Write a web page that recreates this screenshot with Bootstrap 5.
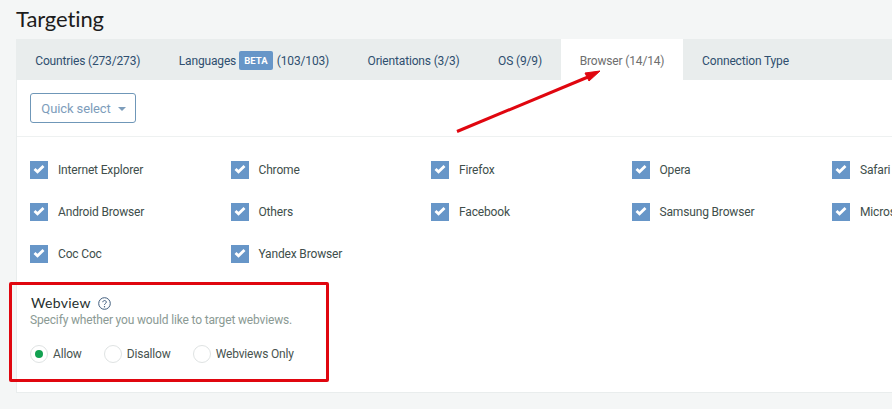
<!DOCTYPE html>
<html lang="en">
<head>
<meta charset="utf-8">
<title>Targeting</title>
<link href="https://cdn.jsdelivr.net/npm/bootstrap@5.3.0/dist/css/bootstrap.min.css" rel="stylesheet">
<style>
html,body{height:409px;overflow:hidden}
body{background:#f4f6f6;font-family:Roboto,sans-serif;font-size:12px;letter-spacing:-.16px;color:#3c4a47;position:relative}
.page-wrap{width:1200px;padding:5px 0 0 16px}
.page-title{font-family:Lato,sans-serif;font-size:22px;font-weight:400;line-height:28px;margin:0 0 6px;color:#1c1c1c;letter-spacing:-.1px}
.panel-box{background:#fff;border:1px solid #e9eded;border-top:0;height:354px}
.tab-bar{background:#e9eded;height:41px;margin:0 -1px;flex-wrap:nowrap}
.tab-link{display:flex;align-items:center;gap:3px;padding:2px 19.250px 0;height:41px;color:#2f4f6f;text-decoration:none;white-space:nowrap}
.tab-link.is-active{background:#fff;color:#6e6e6e;padding:2px 18.500px 0}
.beta-tag{background:#6796c8;color:#fff;font-size:9.500px;font-weight:700;border-radius:2px;padding:0 5px;line-height:19px;height:19px;letter-spacing:.1px;margin-right:1px}
.quick-row{height:57px;border-bottom:1px solid #eef1f1;padding:13px 0 0 13px}
.quick-btn{width:106px;height:30px;padding:1px 0 0 1px;border:1px solid #6f97b8;border-radius:3px;background:#fff;color:#7d9dbb;font-size:13px;letter-spacing:-.1px;display:flex;align-items:center;justify-content:center;gap:7px}
.quick-caret{border:4px solid transparent;border-top-color:#7d9dbb;border-bottom:0;width:0;height:0}
.browser-grid{display:grid;grid-template-columns:repeat(6,200.5px);grid-auto-rows:42px;padding:24px 0 0 13px;height:157px}
.browser-item{display:flex;gap:10px;height:18px;line-height:19px;color:#404e4b;white-space:nowrap}
.check-box{width:18px;height:18px;background:#6796c8;flex:none;display:flex;align-items:center;justify-content:center;padding-bottom:2px}
.webview-block{padding:0 0 0 13px}
.webview-head{font-family:Lato,sans-serif;font-size:14px;line-height:18px;color:#26302e;letter-spacing:.3px;display:flex;align-items:center;gap:7px;padding-left:1px}
.webview-sub{color:#8b9a94;line-height:16px}
.radio-row{margin-top:17px;gap:22px}
.radio-item{display:flex;align-items:center;gap:5px;line-height:18px;color:#48544f}
.radio-dot{width:18px;height:18px;border:1px solid #dfe3e3;border-radius:50%;background:#fff;display:flex;align-items:center;justify-content:center}
.radio-dot.is-on::after{content:"";width:8px;height:8px;border-radius:50%;background:#12a150}
.red-frame{position:absolute;left:9px;top:282px;width:320px;height:100px;border:3px solid #e0060f;border-radius:2px}
.red-arrow{position:absolute;left:0;top:0;pointer-events:none}
</style>
</head>
<body>
<div class="page-wrap">
  <h1 class="page-title">Targeting</h1>
  <div class="panel-box">
    <div class="tab-bar d-flex">
      <a class="tab-link" href="#">Countries (273/273)</a>
      <a class="tab-link" href="#">Languages <span class="beta-tag">BETA</span> (103/103)</a>
      <a class="tab-link" href="#">Orientations (3/3)</a>
      <a class="tab-link" href="#">OS (9/9)</a>
      <a class="tab-link is-active" href="#">Browser (14/14)</a>
      <a class="tab-link" href="#">Connection Type</a>
    </div>
    <div class="quick-row">
      <button class="quick-btn" type="button">Quick select <span class="quick-caret"></span></button>
    </div>
    <div class="browser-grid">
      <div class="browser-item"><span class="check-box"><svg width="12" height="10" viewBox="0 0 12 10"><path d="M1.500 5l3 2.800L10.500 2" fill="none" stroke="#fff" stroke-width="2.800"/></svg></span>Internet Explorer</div>
      <div class="browser-item"><span class="check-box"><svg width="12" height="10" viewBox="0 0 12 10"><path d="M1.500 5l3 2.800L10.500 2" fill="none" stroke="#fff" stroke-width="2.800"/></svg></span>Chrome</div>
      <div class="browser-item"><span class="check-box"><svg width="12" height="10" viewBox="0 0 12 10"><path d="M1.500 5l3 2.800L10.500 2" fill="none" stroke="#fff" stroke-width="2.800"/></svg></span>Firefox</div>
      <div class="browser-item"><span class="check-box"><svg width="12" height="10" viewBox="0 0 12 10"><path d="M1.500 5l3 2.800L10.500 2" fill="none" stroke="#fff" stroke-width="2.800"/></svg></span>Opera</div>
      <div class="browser-item"><span class="check-box"><svg width="12" height="10" viewBox="0 0 12 10"><path d="M1.500 5l3 2.800L10.500 2" fill="none" stroke="#fff" stroke-width="2.800"/></svg></span>Safari</div>
      <div></div>
      <div class="browser-item"><span class="check-box"><svg width="12" height="10" viewBox="0 0 12 10"><path d="M1.500 5l3 2.800L10.500 2" fill="none" stroke="#fff" stroke-width="2.800"/></svg></span>Android Browser</div>
      <div class="browser-item"><span class="check-box"><svg width="12" height="10" viewBox="0 0 12 10"><path d="M1.500 5l3 2.800L10.500 2" fill="none" stroke="#fff" stroke-width="2.800"/></svg></span>Others</div>
      <div class="browser-item"><span class="check-box"><svg width="12" height="10" viewBox="0 0 12 10"><path d="M1.500 5l3 2.800L10.500 2" fill="none" stroke="#fff" stroke-width="2.800"/></svg></span>Facebook</div>
      <div class="browser-item"><span class="check-box"><svg width="12" height="10" viewBox="0 0 12 10"><path d="M1.500 5l3 2.800L10.500 2" fill="none" stroke="#fff" stroke-width="2.800"/></svg></span>Samsung Browser</div>
      <div class="browser-item"><span class="check-box"><svg width="12" height="10" viewBox="0 0 12 10"><path d="M1.500 5l3 2.800L10.500 2" fill="none" stroke="#fff" stroke-width="2.800"/></svg></span>Microsoft Edge</div>
      <div></div>
      <div class="browser-item"><span class="check-box"><svg width="12" height="10" viewBox="0 0 12 10"><path d="M1.500 5l3 2.800L10.500 2" fill="none" stroke="#fff" stroke-width="2.800"/></svg></span>Coc Coc</div>
      <div class="browser-item"><span class="check-box"><svg width="12" height="10" viewBox="0 0 12 10"><path d="M1.500 5l3 2.800L10.500 2" fill="none" stroke="#fff" stroke-width="2.800"/></svg></span>Yandex Browser</div>
    </div>
    <div class="webview-block">
      <div class="webview-head">Webview
        <svg width="13" height="13" viewBox="0 0 13 13"><circle cx="6.500" cy="6.500" r="5.800" fill="none" stroke="#3f5c7c" stroke-width="1"/><path d="M4.800 5.200c0-2.200 3.500-2.200 3.500 0 0 1.300-1.800 1.300-1.800 2.600" fill="none" stroke="#3f5c7c" stroke-width="1"/><circle cx="6.500" cy="9.700" r=".7" fill="#3f5c7c"/></svg>
      </div>
      <div class="webview-sub">Specify whether you would like to target webviews.</div>
      <div class="radio-row d-flex">
        <div class="radio-item"><span class="radio-dot is-on"></span>Allow</div>
        <div class="radio-item"><span class="radio-dot"></span>Disallow</div>
        <div class="radio-item"><span class="radio-dot"></span>Webviews Only</div>
      </div>
    </div>
  </div>
</div>
<div class="red-frame"></div>
<svg class="red-arrow" width="892" height="409" viewBox="0 0 892 409"><path d="M457 131.500L588 77" stroke="#e0060f" stroke-width="3" fill="none"/><path d="M600 71L585 73L589 81Z" fill="#e0060f" stroke="#e0060f"/></svg>
</body>
</html>
